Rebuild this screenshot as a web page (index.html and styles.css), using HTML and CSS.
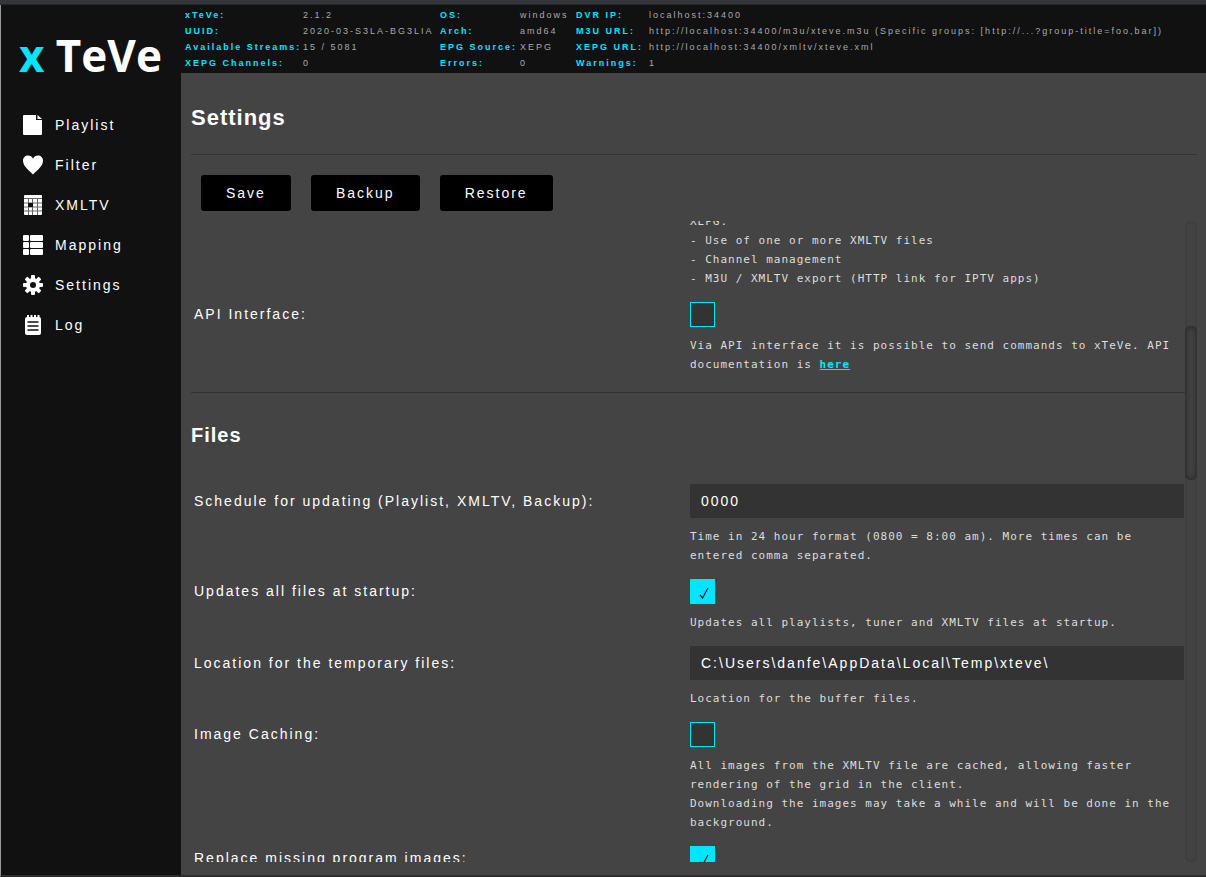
FILE: index.html
```
<!DOCTYPE html>
<html lang="en">

<head>
    <meta charset="UTF-8">
    <meta name="viewport" content="width=device-width, initial-scale=1">
    <title>xTeVe</title>
    <link rel="stylesheet" href="styles.css">
</head>

<body>
    <div class="topline"></div>
    <div class="layout">
        <div class="sidebar">
            <div class="logo"><span>x</span> TeVe</div>
            <nav class="menu">
                <a href="#playlist">
                    <svg viewBox="0 0 20 20"><path d="M1 0h12v5h6v14a1 1 0 0 1-1 1H1a1 1 0 0 1-1-1V1a1 1 0 0 1 1-1zM14.500 0L19 4h-4.500z"/></svg>
                    Playlist
                </a>
                <a href="#filter">
                    <svg viewBox="0 0 20 20"><path d="M10 19.500C7 16.500 0 11.500 0 5.800 0 2.500 2.300.500 5 .500c2.200 0 4 1.200 5 3.200 1-2 2.800-3.200 5-3.200 2.700 0 5 2 5 5.300 0 5.700-7 10.700-10 13.700z"/></svg>
                    Filter
                </a>
                <a href="#xmltv">
                    <svg viewBox="0 0 20 20">
                        <path d="M2 0h16a1 1 0 0 1 1 1v18a1 1 0 0 1-1 1H2a1 1 0 0 1-1-1V1a1 1 0 0 1 1-1z"/>
                        <path class="cut" d="M1 3.500h18M1 8h18M1 12h18M1 16h18M5.500 4v16M9.500 4v16M14.500 4v16"/>
                        <path class="hole" d="M5 8h5v4H5z"/>
                    </svg>
                    XMLTV
                </a>
                <a href="#mapping">
                    <svg viewBox="0 0 20 20">
                        <rect x="0" y="0" width="6" height="6" rx="1"/><rect x="7" y="0" width="13" height="6" rx="1"/>
                        <rect x="0" y="7" width="6" height="6" rx="1"/><rect x="7" y="7" width="13" height="6" rx="1"/>
                        <rect x="0" y="14" width="6" height="6" rx="1"/><rect x="7" y="14" width="13" height="6" rx="1"/>
                    </svg>
                    Mapping
                </a>
                <a href="#settings">
                    <svg viewBox="0 0 20 20">
                        <rect x="8" y="0" width="4" height="20" rx="1"/>
                        <rect x="8" y="0" width="4" height="20" rx="1" transform="rotate(45 10 10)"/>
                        <rect x="8" y="0" width="4" height="20" rx="1" transform="rotate(90 10 10)"/>
                        <rect x="8" y="0" width="4" height="20" rx="1" transform="rotate(135 10 10)"/>
                        <circle cx="10" cy="10" r="7"/>
                        <circle class="hole" cx="10" cy="10" r="3"/>
                    </svg>
                    Settings
                </a>
                <a href="#log">
                    <svg viewBox="0 0 20 20">
                        <path d="M4 2h12a2 2 0 0 1 2 2v14a2 2 0 0 1-2 2H4a2 2 0 0 1-2-2V4a2 2 0 0 1 2-2z"/>
                        <path d="M4 0h2v3H4zM7.500 0h2v3h-2zM11 0h2v3h-2zM14.500 0h2v3h-2z"/>
                        <path class="line" d="M4.500 7h11M4.500 11h11M4.500 15h11"/>
                    </svg>
                    Log
                </a>
            </nav>
        </div>
        <div class="page">
            <table class="info">
                <colgroup>
                    <col class="c1"><col class="c2"><col class="c3"><col class="c4"><col class="c5"><col>
                </colgroup>
                <tr>
                    <th>xTeVe:</th><td>2.1.2</td>
                    <th>OS:</th><td>windows</td>
                    <th>DVR IP:</th><td>localhost:34400</td>
                </tr>
                <tr>
                    <th>UUID:</th><td>2020-03-S3LA-BG3LIA</td>
                    <th>Arch:</th><td>amd64</td>
                    <th>M3U URL:</th><td>http://localhost:34400/m3u/xteve.m3u (Specific groups: [http://...?group-title=foo,bar])</td>
                </tr>
                <tr>
                    <th>Available Streams:</th><td>15 / 5081</td>
                    <th>EPG Source:</th><td>XEPG</td>
                    <th>XEPG URL:</th><td>http://localhost:34400/xmltv/xteve.xml</td>
                </tr>
                <tr>
                    <th>XEPG Channels:</th><td>0</td>
                    <th>Errors:</th><td>0</td>
                    <th>Warnings:</th><td>1</td>
                </tr>
            </table>
            <main class="content">
                <h1>Settings</h1>
                <div class="buttons">
                    <button type="button">Save</button>
                    <button type="button">Backup</button>
                    <button type="button">Restore</button>
                </div>
                <div class="scroll">
                    <form class="settings">
                        <div class="row">
                            <div class="field">
                                <p>XEPG:<br>- Use of one or more XMLTV files<br>- Channel management<br>- M3U / XMLTV export (HTTP link for IPTV apps)</p>
                            </div>
                        </div>
                        <div class="row">
                            <label for="api">API Interface:</label>
                            <div class="field">
                                <input type="checkbox" id="api">
                                <p>Via API interface it is possible to send commands to xTeVe. API documentation is <a href="#api-doc">here</a></p>
                            </div>
                        </div>
                        <h2>Files</h2>
                        <div class="row">
                            <label class="tall" for="update">Schedule for updating (Playlist, XMLTV, Backup):</label>
                            <div class="field">
                                <input type="text" id="update" value="0000">
                                <p>Time in 24 hour format (0800 = 8:00 am). More times can be entered comma separated.</p>
                            </div>
                        </div>
                        <div class="row">
                            <label for="startup">Updates all files at startup:</label>
                            <div class="field">
                                <input type="checkbox" id="startup" checked>
                                <p>Updates all playlists, tuner and XMLTV files at startup.</p>
                            </div>
                        </div>
                        <div class="row">
                            <label class="tall" for="temp">Location for the temporary files:</label>
                            <div class="field">
                                <input type="text" id="temp" value="C:\Users\danfe\AppData\Local\Temp\xteve\">
                                <p>Location for the buffer files.</p>
                            </div>
                        </div>
                        <div class="row">
                            <label for="caching">Image Caching:</label>
                            <div class="field">
                                <input type="checkbox" id="caching">
                                <p>All images from the XMLTV file are cached, allowing faster rendering of the grid in the client.<br>Downloading the images may take a while and will be done in the background.</p>
                            </div>
                        </div>
                        <div class="row">
                            <label for="replace">Replace missing program images:</label>
                            <div class="field">
                                <input type="checkbox" id="replace" checked>
                            </div>
                        </div>
                    </form>
                    <div class="track">
                        <div class="thumb"></div>
                    </div>
                </div>
            </main>
        </div>
    </div>
</body>

</html>
```
FILE: styles.css
```
* {
    margin: 0;
    padding: 0;
    box-sizing: border-box;
}

body {
    display: flex;
    flex-direction: column;
    height: 100vh;
    overflow: hidden;
    background: #444;
    color: #fff;
    font-family: "Liberation Sans", Arial, sans-serif;
    font-size: 14px;
    letter-spacing: 2px;
}

.topline {
    flex: none;
    height: 5px;
    background: #35363a;
    border-bottom: 1px solid #262626;
}

.layout {
    flex: 1;
    min-height: 0;
    display: flex;
    border-left: 1px solid #999;
    border-bottom: 2px solid #2c2c2c;
}

/* sidebar */
.sidebar {
    flex: none;
    width: 180px;
    background: #111;
}

.logo {
    padding: 20px 0 0 18px;
    height: 100px;
    font: bold 44px/60px "Open Sans", "Noto Sans", sans-serif;
    letter-spacing: 0;
    white-space: nowrap;
}

.logo span {
    color: #00e6ff;
}

.menu a {
    display: flex;
    align-items: center;
    gap: 12px;
    height: 40px;
    padding-left: 22px;
    color: #fff;
    text-decoration: none;
}

.menu svg {
    width: 20px;
    height: 20px;
    fill: #fff;
}

.menu .hole {
    fill: #111;
}

.menu .cut {
    stroke: #666;
    stroke-width: 1;
}

.menu .line {
    stroke: #111;
    stroke-width: 1.500;
}

/* server info */
.page {
    flex: 1;
    min-width: 0;
    display: flex;
    flex-direction: column;
}

.info {
    flex: none;
    display: block;
    padding: 2px 0 2px 4px;
    background: #111;
    border-spacing: 0;
    font-size: 9px;
    line-height: 16px;
    white-space: nowrap;
}

.info th {
    color: #00e6ff;
    text-align: left;
}

.info td {
    color: #aaa;
}

.c1 {
    width: 118px;
}

.c2 {
    width: 137px;
}

.c3 {
    width: 80px;
}

.c4 {
    width: 56px;
}

.c5 {
    width: 73px;
}

/* content */
.content {
    flex: 1;
    min-height: 0;
    display: flex;
    flex-direction: column;
    padding: 0 9px 13px 10px;
}

h1 {
    padding: 30px 0 21px;
    border-bottom: 1px solid #333;
    font-size: 22px;
    line-height: 30px;
    letter-spacing: 1px;
}

.buttons {
    display: flex;
    gap: 20px;
    padding: 20px 10px 10px;
}

button {
    height: 36px;
    padding: 0 25px;
    border: none;
    border-radius: 3px;
    background: #000;
    color: #fff;
    font: inherit;
    letter-spacing: inherit;
    cursor: pointer;
}

.scroll {
    flex: 1;
    min-height: 0;
    display: flex;
    overflow: hidden;
}

.settings {
    flex: 1;
    min-width: 0;
    margin-top: -9px;
}

.row {
    display: flex;
    justify-content: flex-end;
    margin-bottom: 14px;
}

label {
    width: 50%;
    padding-left: 3px;
    line-height: 25px;
}

label.tall {
    line-height: 34px;
}

.field {
    width: 50%;
    padding: 0 1px 0 2px;
}

.field input {
    display: block;
    margin-bottom: 9px;
}

.field p {
    color: #ddd;
    font: 11px/19px "DejaVu Sans Mono", Consolas, monospace;
    letter-spacing: 1px;
}

.field p a {
    color: #00e6ff;
    font-weight: bold;
}

input[type=text] {
    width: 100%;
    height: 34px;
    padding: 0 11px;
    border: none;
    background: #333;
    color: #fff;
    font: inherit;
    letter-spacing: inherit;
}

input[type=checkbox] {
    appearance: none;
    width: 25px;
    height: 25px;
    border: 1px solid #00e6ff;
    background: #333;
}

input[type=checkbox]:checked {
    background: #00e6ff url("data:image/svg+xml,%3Csvg xmlns='http://www.w3.org/2000/svg' viewBox='0 0 10 12'%3E%3Cpath d='M1 8l2.500 3L9 1' fill='none' stroke='%23113' stroke-width='1.200'/%3E%3C/svg%3E") 8px 7px / 10px 12px no-repeat;
}

h2 {
    margin-top: 18px;
    padding: 27px 0 34px;
    border-top: 1px solid #333;
    font-size: 20px;
    line-height: 30px;
    letter-spacing: 1px;
}

/* scrollbar */
.track {
    flex: none;
    width: 12px;
    padding-top: 105px;
    border-radius: 5px;
    box-shadow: inset 0 0 5px #383838;
}

.thumb {
    height: 154px;
    border-radius: 5px;
    box-shadow: inset 0 0 6px #222;
}
```
